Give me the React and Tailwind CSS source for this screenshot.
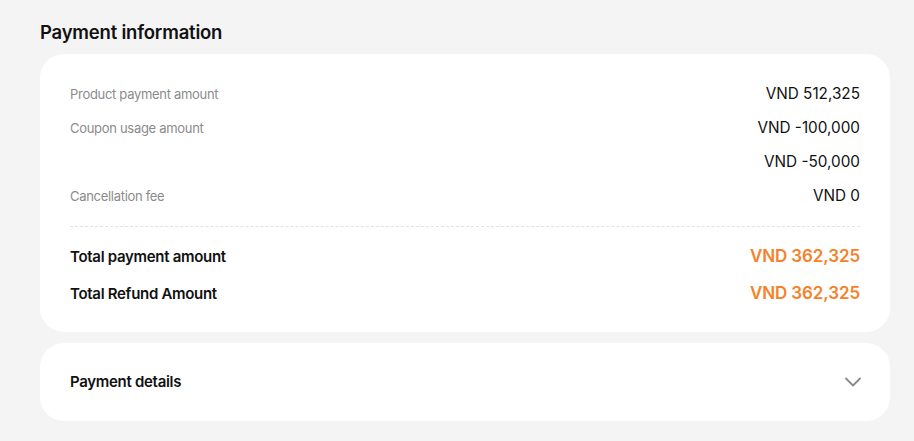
const rows = [
  { label: "Product payment amount", value: "VND 512,325" },
  { label: "Coupon usage amount", value: "VND -100,000" },
  { label: "", value: "VND -50,000" },
  { label: "Cancellation fee", value: "VND 0" },
];

const totals = [
  { label: "Total payment amount", value: "VND 362,325" },
  { label: "Total Refund Amount", value: "VND 362,325" },
];

export default function App() {
  return (
    <div
      className="min-h-[441px] bg-[#f4f4f4] pl-10 pr-6 pt-[18px] pb-5"
      style={{ fontFamily: "Inter, 'Noto Sans', sans-serif" }}
    >
      <h2 className="text-[18.5px] leading-[28px] font-semibold text-[#111] tracking-[-0.2px] mb-2">
        Payment information
      </h2>

      <div className="bg-white rounded-[24px] px-[30px] pt-[30px] pb-[26px]">
        <div className="flex flex-col gap-[13px]">
          {rows.map((r, i) => (
            <div key={i} className="flex justify-between items-center h-[21px]">
              <span className="text-[13px] text-[#8b8b8b] tracking-[-0.3px]">{r.label}</span>
              <span className="text-[15.3px] text-[#111]">{r.value}</span>
            </div>
          ))}
        </div>

        <div className="border-t border-dashed border-[#e2e2e2] mt-[19px] mb-[18px]" />

        <div className="flex flex-col gap-[13px]">
          {totals.map((t, i) => (
            <div key={i} className="flex justify-between items-center h-[24px]">
              <span className="text-[15px] font-semibold text-[#111] tracking-[-0.3px]">{t.label}</span>
              <span className="text-[17px] font-semibold text-[#f5822a] tracking-[-0.1px]">{t.value}</span>
            </div>
          ))}
        </div>
      </div>

      <div className="mt-[11px] bg-white rounded-[24px] px-[30px] h-[78px] flex items-center justify-between">
        <span className="text-[15px] font-semibold text-[#111] tracking-[-0.3px]">Payment details</span>
        <svg width="16" height="10" viewBox="0 0 16 10" fill="none" className="mr-[-0.5px]">
          <polyline points="1,1.5 8,8.5 15,1.5" stroke="#8a8a8a" strokeWidth="1.8" strokeLinecap="round" strokeLinejoin="round" />
        </svg>
      </div>
    </div>
  );
}
